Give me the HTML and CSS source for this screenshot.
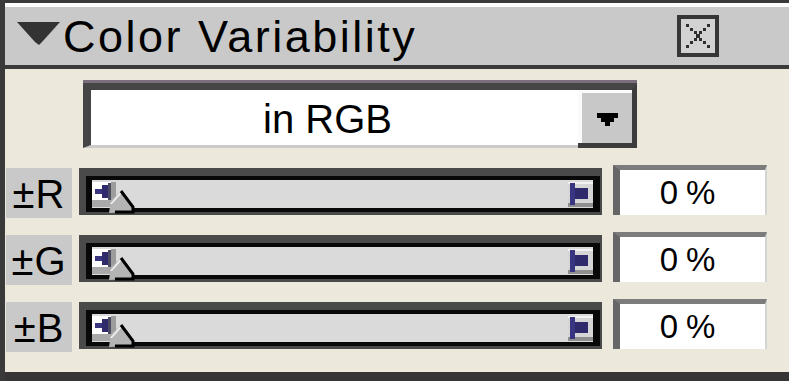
FILE: index.html
```html
<!DOCTYPE html>
<html>
<head>
<meta charset="utf-8">
<link rel="stylesheet" href="styles.css">
</head>
<body>
<div class="panel">
  <div class="cap"></div>
  <div class="titlebar">
    <svg class="tri" width="43" height="23" viewBox="0 0 43 23"><polygon points="0,0 43,0 25,20 22,23 18,20" fill="#333"/></svg>
    <span class="title">Color Variability</span>
    <svg class="close" width="42" height="42" viewBox="0 0 42 42">
      <rect x="2" y="2" width="38" height="38" fill="#d2d2d2" stroke="#363636" stroke-width="4"/>
      <g fill="#2e2e2e">
        <rect x="9" y="9" width="3" height="3"/><rect x="13" y="13" width="3" height="3"/><rect x="17" y="16" width="3" height="3"/><rect x="22" y="16" width="3" height="3"/><rect x="19" y="19" width="4" height="4"/><rect x="17" y="23" width="3" height="3"/><rect x="22" y="23" width="3" height="3"/><rect x="26" y="26" width="3" height="3"/><rect x="30" y="30" width="3" height="3"/>
        <rect x="30" y="9" width="3" height="3"/><rect x="26" y="13" width="3" height="3"/><rect x="13" y="26" width="3" height="3"/><rect x="9" y="30" width="3" height="3"/>
      </g>
    </svg>
  </div>
  <div class="content">
    <div class="select">
      <div class="field">in RGB</div>
      <div class="sbtn">
        <svg width="21" height="13" viewBox="0 0 21 13"><path d="M0 0H21V5H17V9H13V13H8V9H4V5H0Z" fill="#000"/></svg>
      </div>
    </div>
    <div class="rows">
      <div class="row">
        <div class="label">±R</div>
        <div class="track"><div class="inner">
          <svg class="lbtn" width="24" height="25" viewBox="0 0 24 25"><rect width="24" height="25" fill="#fff"/><rect y="18" width="24" height="7" fill="#a9a9a9"/><rect x="19" width="5" height="25" fill="#9c9c9c"/><rect x="3" y="7" width="10" height="5" fill="#3a3580"/><rect x="10" y="3" width="8" height="13" fill="#2e2a6c"/><rect x="16" y="1" width="3" height="17" fill="#4a4a60"/></svg>
          <svg class="thumb" width="26" height="24" viewBox="0 0 26 24"><polygon points="0,23 2,10 12,1 24,17 24,22" fill="#b4b4b4"/><polygon points="1,14 12,1 12,4 3,14" fill="#f0f0f0"/><polyline points="12,1 24,17 24,22 6,22" fill="none" stroke="#000" stroke-width="3"/></svg>
          <svg class="rbtn" width="25" height="25" viewBox="0 0 25 25"><rect width="25" height="25" fill="#d6d6d6"/><rect width="25" height="2" fill="#f2f2f2"/><rect y="21" width="25" height="4" fill="#8f8f8f"/><rect x="2" y="1" width="5" height="22" fill="#3a3580"/><rect x="7" y="6" width="13" height="11" fill="#2e2a6c"/></svg>
        </div></div>
        <div class="value">0%</div>
      </div>
      <div class="row">
        <div class="label">±G</div>
        <div class="track"><div class="inner">
          <svg class="lbtn" width="24" height="25" viewBox="0 0 24 25"><rect width="24" height="25" fill="#fff"/><rect y="18" width="24" height="7" fill="#a9a9a9"/><rect x="19" width="5" height="25" fill="#9c9c9c"/><rect x="3" y="7" width="10" height="5" fill="#3a3580"/><rect x="10" y="3" width="8" height="13" fill="#2e2a6c"/><rect x="16" y="1" width="3" height="17" fill="#4a4a60"/></svg>
          <svg class="thumb" width="26" height="24" viewBox="0 0 26 24"><polygon points="0,23 2,10 12,1 24,17 24,22" fill="#b4b4b4"/><polygon points="1,14 12,1 12,4 3,14" fill="#f0f0f0"/><polyline points="12,1 24,17 24,22 6,22" fill="none" stroke="#000" stroke-width="3"/></svg>
          <svg class="rbtn" width="25" height="25" viewBox="0 0 25 25"><rect width="25" height="25" fill="#d6d6d6"/><rect width="25" height="2" fill="#f2f2f2"/><rect y="21" width="25" height="4" fill="#8f8f8f"/><rect x="2" y="1" width="5" height="22" fill="#3a3580"/><rect x="7" y="6" width="13" height="11" fill="#2e2a6c"/></svg>
        </div></div>
        <div class="value">0%</div>
      </div>
      <div class="row">
        <div class="label">±B</div>
        <div class="track"><div class="inner">
          <svg class="lbtn" width="24" height="25" viewBox="0 0 24 25"><rect width="24" height="25" fill="#fff"/><rect y="18" width="24" height="7" fill="#a9a9a9"/><rect x="19" width="5" height="25" fill="#9c9c9c"/><rect x="3" y="7" width="10" height="5" fill="#3a3580"/><rect x="10" y="3" width="8" height="13" fill="#2e2a6c"/><rect x="16" y="1" width="3" height="17" fill="#4a4a60"/></svg>
          <svg class="thumb" width="26" height="24" viewBox="0 0 26 24"><polygon points="0,23 2,10 12,1 24,17 24,22" fill="#b4b4b4"/><polygon points="1,14 12,1 12,4 3,14" fill="#f0f0f0"/><polyline points="12,1 24,17 24,22 6,22" fill="none" stroke="#000" stroke-width="3"/></svg>
          <svg class="rbtn" width="25" height="25" viewBox="0 0 25 25"><rect width="25" height="25" fill="#d6d6d6"/><rect width="25" height="2" fill="#f2f2f2"/><rect y="21" width="25" height="4" fill="#8f8f8f"/><rect x="2" y="1" width="5" height="22" fill="#3a3580"/><rect x="7" y="6" width="13" height="11" fill="#2e2a6c"/></svg>
        </div></div>
        <div class="value">0%</div>
      </div>
    </div>
  </div>
  <div class="bottom"></div>
</div>
</body>
</html>
```
FILE: styles.css
```css
html, body {
  margin: 0;
  padding: 0;
}
body {
  width: 789px;
  height: 381px;
  overflow: hidden;
  background: #ece9dc;
  font-family: "Liberation Sans", Arial, sans-serif;
  color: #000;
}
.panel {
  height: 381px;
  box-sizing: border-box;
  border-left: 5px solid #3a3a3a;
  display: flex;
  flex-direction: column;
}
.cap {
  height: 4px;
  border-top: 3px solid #3a3a3a;
  background: #fdfdfd;
}
.titlebar {
  height: 58px;
  background: #c9c9c9;
  border-bottom: 4px solid #3a3a3a;
  display: flex;
  align-items: flex-start;
}
.tri {
  display: block;
  margin: 15px 0 0 12px;
}
.title {
  margin: 7px 0 0 3px;
  font-size: 45px;
  line-height: 45px;
  letter-spacing: 2.5px;
  white-space: nowrap;
}
.close {
  display: block;
  margin: 8px 70px 0 auto;
}
.content {
  flex: 1;
  padding-top: 11px;
}
.select {
  margin-left: 78px;
  width: 554px;
  height: 68px;
  box-sizing: border-box;
  border-top: 3px solid #7b6f7e;
  display: flex;
}
.field {
  flex: 1;
  border-top: 7px solid #454545;
  border-left: 8px solid #454545;
  border-bottom: 3px solid #cbcbcb;
  background: #fff;
  display: flex;
  align-items: center;
  justify-content: center;
  font-size: 40px;
  padding: 3px 14px 0 0;
  box-sizing: border-box;
}
.sbtn {
  width: 59px;
  box-sizing: border-box;
  border-top: 7px solid #454545;
  border-right: 5px solid #3c3c3c;
  border-bottom: 5px solid #3c3c3c;
  background: #c8c8c8;
  box-shadow: inset 4px 3px #fbfbfb;
  display: flex;
  justify-content: center;
  align-items: flex-start;
}
.sbtn svg {
  display: block;
  margin-top: 23px;
  margin-left: 4px;
}
.rows {
  margin-top: 17px;
  display: flex;
  flex-direction: column;
  gap: 14px;
}
.row {
  height: 53px;
  display: flex;
  align-items: flex-start;
}
.label {
  margin: 3px 0 0 1px;
  width: 66px;
  height: 50px;
  background: #c9c9c9;
  display: flex;
  align-items: center;
  justify-content: center;
  font-size: 40px;
  letter-spacing: 1px;
  padding-top: 2px;
  box-sizing: border-box;
}
.track {
  margin: 3px 0 0 7px;
  width: 523px;
  height: 47px;
  box-sizing: border-box;
  background: #4a4a4a;
  padding: 8px 2px 3px 7px;
}
.inner {
  position: relative;
  height: 100%;
  box-sizing: border-box;
  border-style: solid;
  border-color: #080808;
  border-width: 4px 7px 4px 6px;
  background: #dadada;
  display: flex;
  justify-content: space-between;
  align-items: flex-start;
}
.lbtn, .rbtn {
  display: block;
  margin-top: 2px;
}
.thumb {
  position: absolute;
  left: 17px;
  top: 10px;
}
.value {
  margin-left: 11px;
  width: 154px;
  height: 50px;
  box-sizing: border-box;
  background: #fff;
  border-left: 7px solid #666;
  border-top: 5px solid #7c7c7c;
  border-right: 2px solid #d4d4d4;
  display: flex;
  align-items: center;
  justify-content: center;
  font-size: 33px;
  letter-spacing: 8px;
  padding-right: 2px;
}
.bottom {
  height: 9px;
  background: #353535;
}
```
